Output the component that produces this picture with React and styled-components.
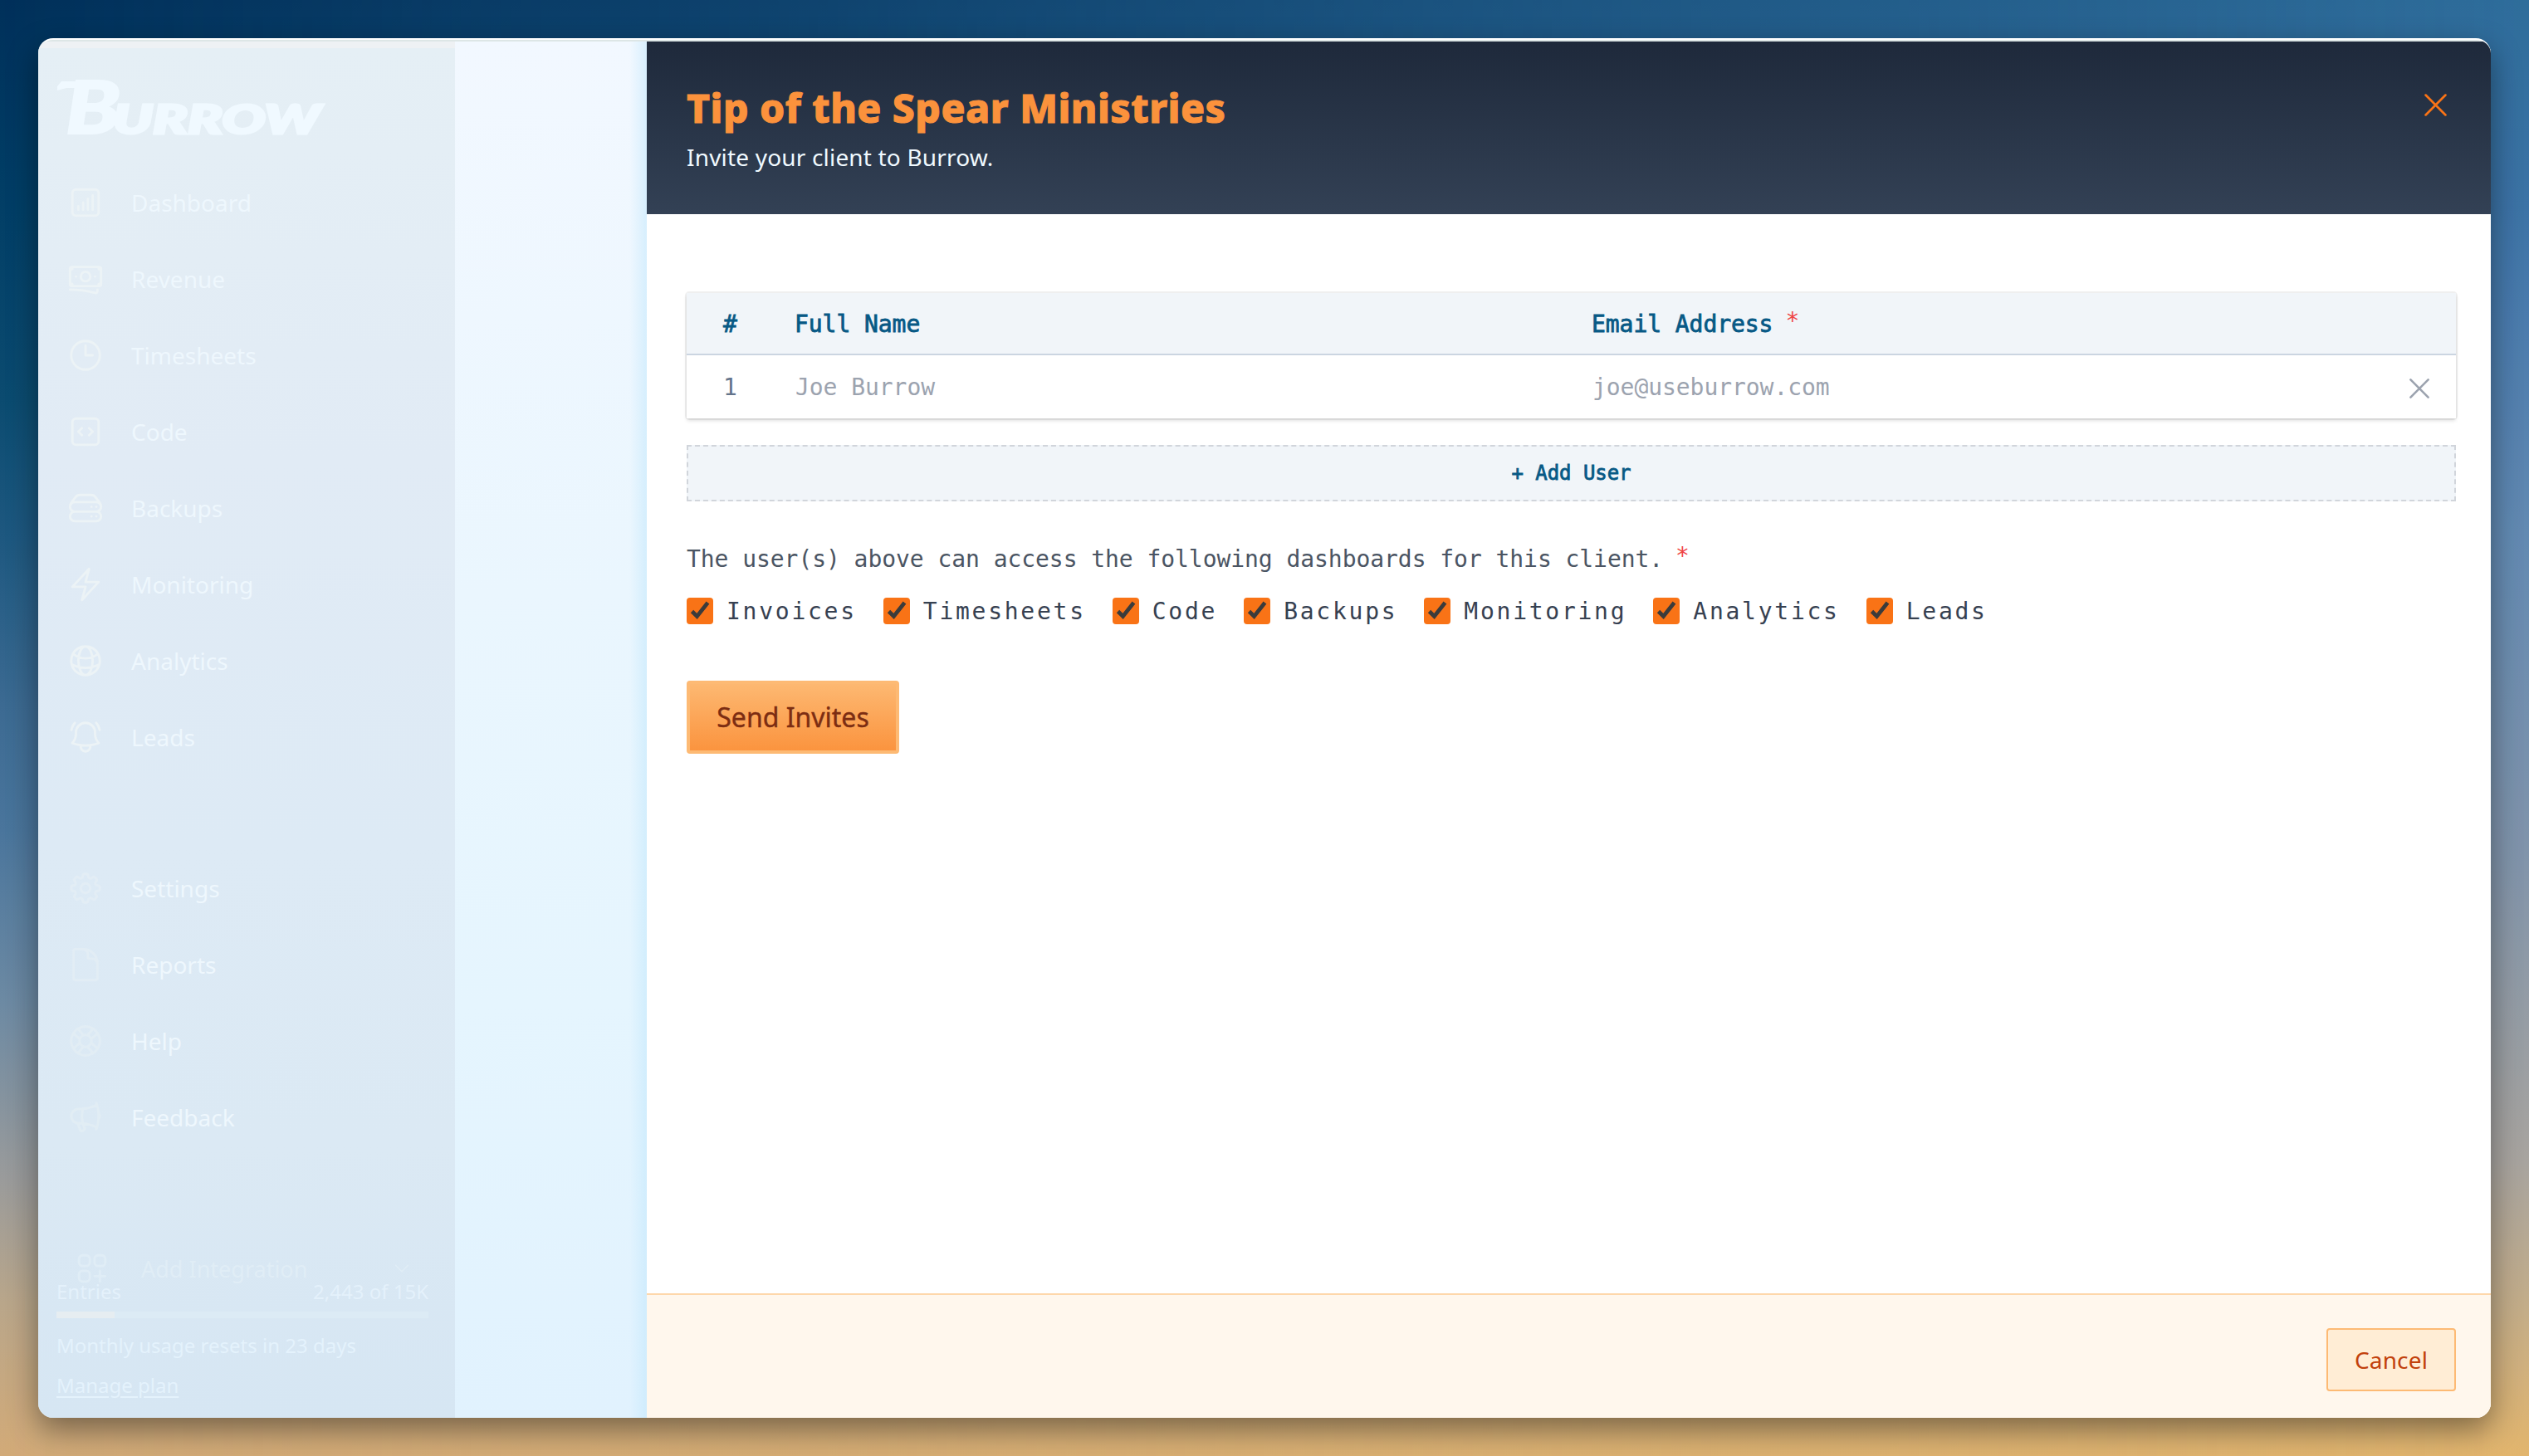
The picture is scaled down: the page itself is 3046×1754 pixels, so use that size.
import React from 'react';
import styled, { createGlobalStyle } from 'styled-components';
import { HiOutlineChartBarSquare, HiOutlineBanknotes, HiOutlineClock, HiOutlineCodeBracketSquare, HiOutlineServerStack, HiOutlineBolt, HiOutlineGlobeAlt, HiOutlineBellAlert, HiOutlineCog8Tooth, HiOutlineDocument, HiOutlineLifebuoy, HiOutlineMegaphone, HiOutlineSquaresPlus, HiChevronDown } from 'react-icons/hi2';

const sans = `"Noto Sans", "Open Sans", sans-serif`;
const mono = `"DejaVu Sans Mono", "Liberation Mono", monospace`;

const Global = createGlobalStyle`
  * { box-sizing: border-box; }
  body { margin: 0; font-family: ${sans}; }
  button { font: inherit; margin: 0; padding: 0; border: 0; background: none; }
`;
const Desktop = styled.div`
  position: relative; width: 3046px; height: 1754px; padding: 46px; overflow: hidden;
  background: linear-gradient(180deg, #00305a 0px, #003c64 200px, #0b4b70 480px, #1e5880 650px, #3c6a92 850px, #4a759c 1000px, #6d8aa3 1210px, #9a9b9b 1420px, #b9a68a 1570px, #d2aa78 1754px);
  &::before {
    content: ''; position: absolute; inset: 0;
    background: linear-gradient(180deg, #2e6d9b 0px, #3c73a6 250px, #4a7bad 380px, #628ab2 640px, #8094ab 1020px, #a8a49f 1400px, #c4ad88 1580px, #e2b56d 1754px);
    mask-image: linear-gradient(90deg, transparent, #000);
  }
`;
const Shade = styled.div`position: relative; border-radius: 18px; box-shadow: 0 14px 36px rgba(0,0,0,.42);`;
const Window = styled.div`
  display: flex; flex-direction: column; width: 2954px; height: 1662px;
  border-radius: 18px; overflow: hidden; border-top: 2px solid #fff; background: #dde6e6;
  padding-top: 2px;
`;
const Body = styled.div`display: flex; flex: 1; min-height: 0;`;
const Sidebar = styled.aside`
  width: 502px; flex: none; padding: 38px 32px 0 22px; display: flex; flex-direction: column;
  background: linear-gradient(180deg, #e5eff5 0%, #e1ebf5 30%, #ddeaf5 58%, #dbe9f4 80%, #d6e6f3 100%);
  border-top: 8px solid #eef1f4;
  color: #eef7fd;
`;
const Logo = styled.svg`display: block; flex: none; width: 324px; height: 68px; margin-bottom: 34px; overflow: visible; fill: #f0f9ff; stroke: #f0f9ff;`;
const LogoText = styled.text`font-family: Lato, sans-serif; font-style: italic; font-weight: 900;`;
const Nav = styled.nav`display: flex; flex-direction: column; margin-bottom: ${p => p.$gap}px;`;
const NavItem = styled.a`
  display: flex; align-items: center; gap: 32px; height: 92px; padding-left: 12px; font-size: 28px;
  svg { width: 46px; height: 46px; color: #ecf3f6; opacity: ${p => p.$faint ? .4 : 1}; }
`;
const Integration = styled.div`
  display: flex; align-items: center; height: 42px; padding: 0 20px; font-size: 27px; color: #e0edf6; flex: none;
  svg { width: 46px; height: 46px; }
  span { margin-left: 36px; flex: 1; }
  svg:last-child { width: 24px; height: 24px; }
`;
const Usage = styled.div`display: flex; justify-content: space-between; font-size: 24px; line-height: 30px; margin-top: -8px; color: #e4f1fb;`;
const Meter = styled.div`height: 8px; margin-top: 9px; background: #dcebf5;`;
const MeterFill = styled.div`width: 70px; height: 8px; background: #e6edf1;`;
const Note = styled.div`font-size: 24px; line-height: 30px; margin-top: 18px; text-decoration: ${p => p.$link ? 'underline' : 'none'}; text-underline-offset: 4px; color: #e4f2fc;`;
const Backdrop = styled.div`
  width: 231px; flex: none;
  background: linear-gradient(90deg, rgba(190,230,252,0) 91%, rgba(190,230,252,.5) 100%), linear-gradient(180deg, #f2f8ff 0%, #eaf6fe 40%, #e5f5fe 70%, #e1f2fe 100%);
`;
const Panel = styled.section`flex: 1; display: flex; flex-direction: column; background: #fff;`;
const Header = styled.header`
  height: 208px; flex: none; display: flex; justify-content: space-between; padding: 50px 48px 0;
  background: linear-gradient(180deg, #1e293b, #334155);
`;
const Title = styled.h1`margin: 0; font: 800 48px/60px ${sans}; letter-spacing: 0.48px; color: #fb923c; -webkit-text-stroke: 1px #fb923c;`;
const Subtitle = styled.p`margin: 9px 0 0; font-size: 28px; line-height: 40px; letter-spacing: 0.18px; color: #f0f9ff;`;
const IconButton = styled.button`
  display: flex; height: max-content; color: ${p => p.$color}; margin: ${p => p.$margin};
`;
const Content = styled.main`flex: 1; padding: 95px 42px 0 48px; display: flex; flex-direction: column; align-items: stretch; font-family: ${mono}; letter-spacing: -0.056px; font-size: 28px;`;
const Table = styled.div`height: 151px; border-radius: 3px; box-shadow: 0 0 0 2px rgba(0,0,0,.06), 0 3px 4px rgba(0,0,0,.12);`;
const Row = styled.div`
  display: grid; grid-template-columns: 130px 960px 1fr 70px; align-items: center;
  height: ${p => p.$head ? 75 : 76}px; padding-top: ${p => p.$head ? 2 : 0}px;
  background: ${p => p.$head ? '#f1f5f9' : '#fff'};
  border-bottom: ${p => p.$head ? '2px solid #cbd5e1' : '0'};
  color: ${p => p.$head ? '#075985' : '#9ca3af'};
  -webkit-text-stroke: ${p => p.$head ? '0.8px #075985' : '0'};
`;
const Num = styled.span`padding-left: 44px; color: ${p => p.$head ? 'inherit' : '#64748b'};`;
const Cell = styled.span`padding-left: ${p => p.$pad || 0}px;`;
const Star = styled.sup`color: #ef4444; font-size: 28px; line-height: 0; vertical-align: 4px; -webkit-text-stroke: 0; margin-left: 15px;`;
const AddUser = styled.button`
  height: 68px; margin-top: 32px; border: 2px dashed #d1d5db; background: #f1f5f9; color: #075985;
  font: 400 24px ${mono}; -webkit-text-stroke: 0.8px #075985; letter-spacing: -0.05px;
`;
const Hint = styled.p`margin: 50px 0 0; line-height: 40px; color: #4b5563;`;
const Checks = styled.div`display: flex; gap: 32px; margin-top: 26px; height: 32px;`;
const Check = styled.label`
  display: flex; align-items: center; gap: 16px; letter-spacing: 2.74px; color: #374151; line-height: 32px;
  svg { width: 32px; height: 32px; background: #f97316; border-radius: 4px; }
  span { padding-top: 2px; }
`;
const Send = styled.button`
  width: 256px; height: 88px; margin-top: 68px; padding-bottom: 2px; border: 4px solid #fdba74; border-radius: 4px;
  background: linear-gradient(180deg, #fdba74, #fb923c); background-origin: border-box;
  color: #7c2d12; font: 400 32px ${sans}; -webkit-text-stroke: 0.4px #7c2d12;
`;
const Footer = styled.footer`
  height: 150px; flex: none; border-top: 2px solid #fed7aa; background: #fff7ed;
  display: flex; justify-content: flex-end; padding: 40px 42px 0;
`;
const Cancel = styled.button`
  width: 156px; height: 76px; border: 2px solid #fdba74; border-radius: 4px; background: #ffedd5;
  color: #c2410c; font: 400 28px ${sans}; letter-spacing: 0.15px;
`;

const X = ({ size, stroke }) => (
  <svg width={size} height={size} viewBox="0 0 24 24" fill="none" stroke="currentColor" strokeWidth={stroke} strokeLinecap="round"><path d="M1.4 1.4l21.2 21.2M22.6 1.4L1.4 22.6" /></svg>
);
const main = [['Dashboard', HiOutlineChartBarSquare], ['Revenue', HiOutlineBanknotes], ['Timesheets', HiOutlineClock], ['Code', HiOutlineCodeBracketSquare], ['Backups', HiOutlineServerStack], ['Monitoring', HiOutlineBolt], ['Analytics', HiOutlineGlobeAlt], ['Leads', HiOutlineBellAlert]];
const extra = [['Settings', HiOutlineCog8Tooth], ['Reports', HiOutlineDocument], ['Help', HiOutlineLifebuoy], ['Feedback', HiOutlineMegaphone]];
const access = ['Invoices', 'Timesheets', 'Code', 'Backups', 'Monitoring', 'Analytics', 'Leads'];

export default function App() {
  return (
    <>
      <Global />
      <Desktop>
        <Shade>
          <Window>
            <Body>
              <Sidebar>
                <Logo viewBox="0 0 324 68">
                  <path d="M1 8L6 2H40V10H12L1 13Z" stroke="none" />
                  <LogoText x="11" y="65" fontSize="87" strokeWidth="2" textLength="66" lengthAdjust="spacingAndGlyphs">B</LogoText>
                  <LogoText x="68" y="65" fontSize="48" strokeWidth="3" textLength="250" lengthAdjust="spacingAndGlyphs">URROW</LogoText>
                </Logo>
                <Nav $gap={90}>{main.map(([n, I]) => <NavItem key={n}><I />{n}</NavItem>)}</Nav>
                <Nav $gap={115}>{extra.map(([n, I]) => <NavItem key={n} $faint><I />{n}</NavItem>)}</Nav>
                <Integration><HiOutlineSquaresPlus /><span>Add Integration</span><HiChevronDown /></Integration>
                <Usage><span>Entries</span><span>2,443 of 15K</span></Usage>
                <Meter><MeterFill /></Meter>
                <Note>Monthly usage resets in 23 days</Note>
                <Note $link>Manage plan</Note>
              </Sidebar>
              <Backdrop />
              <Panel>
                <Header>
                  <div>
                    <Title>Tip of the Spear Ministries</Title>
                    <Subtitle>Invite your client to Burrow.</Subtitle>
                  </div>
                  <IconButton $color="#f97316" $margin="13px 5px 0 0"><X size={27} stroke={2.4} /></IconButton>
                </Header>
                <Content>
                  <Table>
                    <Row $head><Num $head>#</Num><Cell>Full Name</Cell><Cell>Email Address<Star>*</Star></Cell></Row>
                    <Row><Num>1</Num><Cell $pad={1}>Joe Burrow</Cell><Cell $pad={1}>joe@useburrow.com</Cell>
                      <IconButton $color="#9ca3af" $margin="3px 0 0 14px"><X size={24} stroke={2.6} /></IconButton></Row>
                  </Table>
                  <AddUser>+ Add User</AddUser>
                  <Hint>The user(s) above can access the following dashboards for this client.<Star>*</Star></Hint>
                  <Checks>
                    {access.map(n => (
                      <Check key={n}>
                        <svg viewBox="0 0 32 32" fill="none" stroke="#3b3b3b" strokeWidth="4.8"><path d="M6.5 16.5L12.5 22.5L25.5 6" /></svg><span>{n}</span>
                      </Check>
                    ))}
                  </Checks>
                  <Send>Send Invites</Send>
                </Content>
                <Footer><Cancel>Cancel</Cancel></Footer>
              </Panel>
            </Body>
          </Window>
        </Shade>
      </Desktop>
    </>
  );
}
